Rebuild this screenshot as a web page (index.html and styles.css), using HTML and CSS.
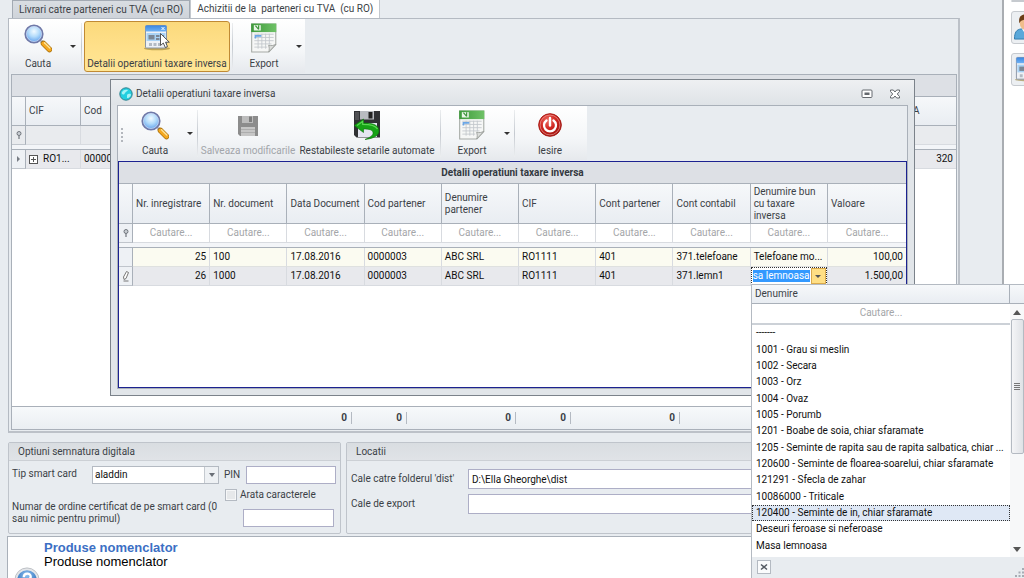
FILE: index.html
```
<!DOCTYPE html>
<html lang="ro">
<head>
    <meta charset="UTF-8">
    <meta name="viewport" content="width=device-width, initial-scale=1.0">
    <title>Detalii operatiuni taxare inversa</title>
    <link rel="stylesheet" href="styles.css">
</head>
<body>
    <!-- shared icons -->
    <svg class="defs" width="0" height="0" aria-hidden="true">
        <defs>
            <radialGradient id="gLens" cx="0.5" cy="0.35" r="0.6">
                <stop offset="0" stop-color="#f2faff"/>
                <stop offset="0.5" stop-color="#b4dcfb"/>
                <stop offset="1" stop-color="#68a6ee"/>
            </radialGradient>
            <linearGradient id="gBlue" x1="0" y1="0" x2="0" y2="1">
                <stop offset="0" stop-color="#3b86e0"/>
                <stop offset="1" stop-color="#6fb2f4"/>
            </linearGradient>
            <linearGradient id="gGreen" x1="0" y1="0" x2="1" y2="0">
                <stop offset="0" stop-color="#3f9a3c"/>
                <stop offset="1" stop-color="#6fc267"/>
            </linearGradient>
            <radialGradient id="gRed" cx="0.4" cy="0.3" r="0.75">
                <stop offset="0" stop-color="#f06a60"/>
                <stop offset="0.5" stop-color="#cf2620"/>
                <stop offset="1" stop-color="#96100c"/>
            </radialGradient>
            <radialGradient id="gHelp" cx="0.5" cy="0.25" r="0.7">
                <stop offset="0" stop-color="#8cc0f0"/>
                <stop offset="1" stop-color="#2566b4"/>
            </radialGradient>
        </defs>
        <symbol id="iconSearch" viewBox="0 0 28 28">
            <path d="M17 17l2.500 2.500" stroke="#8a8f9c" stroke-width="3"/>
            <path d="M19.500 19.500l6 6" stroke="#a8700c" stroke-width="5.500" stroke-linecap="round"/>
            <path d="M19.500 19.500l6 6" stroke="#f5a820" stroke-width="4" stroke-linecap="round"/>
            <path d="M20.500 18.800l5.300 5.300" stroke="#fde49a" stroke-width="1.400" stroke-linecap="round"/>
            <circle cx="10" cy="10" r="8.700" fill="url(#gLens)" stroke="#7079a8" stroke-width="1.800"/>
            <circle cx="10" cy="10" r="7.500" fill="none" stroke="#cfdaf0" stroke-width="0.700"/>
        </symbol>
        <symbol id="iconForm" viewBox="0 0 28 28">
            <ellipse cx="14" cy="24.500" rx="13" ry="1.700" fill="#8e7424" opacity="0.55"/>
            <rect x="2.500" y="1.500" width="21" height="22.500" rx="1" fill="#eef1f5" stroke="#8a95a5"/>
            <rect x="2.500" y="1.500" width="21" height="6" rx="1" fill="url(#gBlue)"/>
            <path d="M18.500 3l3 3m0-3l-3 3" stroke="#fff" stroke-width="1"/>
            <rect x="3.500" y="9" width="19" height="8" fill="#a9d3f5"/>
            <rect x="5.500" y="11" width="6" height="4.500" fill="#7b8794"/>
            <path d="M13 11h3.500v2H13zM13 14h3.500v2H13zM18 11h3v2h-3z" fill="#7b8794"/>
            <path d="M6 19h3v3H6zM10.500 19h3v3h-3zM15 19h2v3h-2z" fill="#b3bac3"/>
            <path d="M17.500 9.500v12l2.800-2.500 2 4.500 2.200-1-2-4.300h3.800z" fill="#fff" stroke="#444" stroke-width="0.900"/>
        </symbol>
        <symbol id="iconSheet" viewBox="0 0 26 28">
            <path d="M1.500 1h22.500v19l-6.500 7h-16z" fill="#f6f7f6" stroke="#a5aaa5"/>
            <rect x="1" y="0.500" width="23.500" height="8" fill="url(#gGreen)"/>
            <rect x="3.500" y="2" width="6.500" height="5" fill="#eaf6e8"/>
            <path d="M5 2.500l3 3.500m0-4v4" stroke="#3d943b" stroke-width="1.100" fill="none"/>
            <path d="M4 10.500h18M4 13.500h18M4 16.500h18M4 19.500h16M4 22.500h12M7.500 10v14M11 10v14M14.500 10v14M18 10v10" stroke="#c2c7cc" stroke-width="0.800"/>
            <path d="M5 14.500V12h5.500" stroke="#6ba6e6" stroke-width="1.500" fill="none"/>
            <path d="M24 20l-6.500 7c.5-2 .6-4-.2-6.200 2.500.6 4.500.2 6.700-.8z" fill="#dcdedc" stroke="#989c98" stroke-width="0.800"/>
        </symbol>
        <symbol id="iconFloppy" viewBox="0 0 22 22">
            <path d="M1 1h20v20H3l-2-2z" fill="#8c8c8c"/>
            <rect x="5" y="1" width="11" height="7" fill="#bcbcbc"/>
            <rect x="12" y="1.500" width="3" height="5.500" fill="#7d7d7d"/>
            <rect x="4" y="12" width="14" height="9" fill="#c6c6c6"/>
            <path d="M4 14.500h14M4 17.500h14" stroke="#adadad"/>
        </symbol>
        <symbol id="iconRestore" viewBox="0 0 28 30">
            <path d="M1 1h26v26.500H3.500L1 25z" fill="#303134"/>
            <path d="M2 2h4v8H2z" fill="#505154"/>
            <rect x="7" y="1" width="14" height="8.500" fill="#b8bbc0"/>
            <rect x="15.500" y="2" width="4" height="6.500" fill="#222"/>
            <rect x="5" y="13" width="19" height="14" fill="#e5e7f1"/>
            <path d="M1.200 15.500L10.500 9v4c9-.2 15.500 2 15.500 8 0 4.500-5 7.500-14 8.500 6-2.500 8.500-4.500 8-7-.5-2.700-3.500-3.500-9.500-3.500v3.500z" fill="#16a316" stroke="#0a700a" stroke-width="0.600"/>
            <path d="M4 15.400L9.700 11.500v2.800c8 0 13 1.500 14.800 4.700" stroke="#5bd653" stroke-width="1.200" fill="none"/>
        </symbol>
        <symbol id="iconPower" viewBox="0 0 24 24">
            <circle cx="12" cy="12" r="11.300" fill="url(#gRed)" stroke="#a81a14"/>
            <circle cx="12" cy="12" r="9.900" fill="none" stroke="#ee9c96" stroke-width="0.700"/>
            <path d="M8.500 7.500a6 6 0 1 0 7 0" fill="none" stroke="#fff" stroke-width="2.300" stroke-linecap="round"/>
            <path d="M12 5v7.500" stroke="#fff" stroke-width="2.400" stroke-linecap="round"/>
        </symbol>
        <symbol id="iconUser" viewBox="0 0 28 28">
            <path d="M.5 26c0-7 2-10 7-10.500h9c6 .5 9 3.500 9 10.500z" fill="#5aa8da" stroke="#347cae"/>
            <path d="M8 15h8l-4 6z" fill="#fff"/>
            <ellipse cx="12" cy="9" rx="6" ry="7.500" fill="#f0bd8c"/>
            <path d="M5.500 9.500c-1-6.500 2-9 6.500-9s7.500 2.500 6.500 9c-1-3-2-4-4-4.500-3 1-7 1-9 4.500z" fill="#6b3d16"/>
        </symbol>
        <symbol id="iconPin" viewBox="0 0 6 8">
            <circle cx="3" cy="2.500" r="2" fill="#c9ced4" stroke="#70757c"/>
            <path d="M3 4.500V8" stroke="#70757c" stroke-width="1.200"/>
        </symbol>
    </svg>

    <main class="workspace">
        <nav class="tabs">
            <a class="tab" href="#livrari">Livrari catre parteneri cu TVA (cu RO)</a>
            <a class="tab active" href="#achizitii">Achizitii de la&nbsp; parteneri cu TVA&nbsp; (cu RO)</a>
        </nav>

        <section class="panel">
            <div class="toolbar main-toolbar">
                <button class="tool search-tool"><svg class="tool-icon"><use href="#iconSearch"/></svg>Cauta</button>
                <button class="drop" aria-label="Optiuni cautare"></button>
                <span class="split"></span>
                <button class="tool pressed"><svg class="tool-icon"><use href="#iconForm"/></svg>Detalii operatiuni taxare inversa</button>
                <span class="split"></span>
                <button class="tool export-tool"><svg class="tool-icon"><use href="#iconSheet"/></svg>Export</button>
                <button class="drop" aria-label="Optiuni export"></button>
            </div>

            <div class="grid-box">
                <table class="grid back-grid">
                    <colgroup><col class="col-mark"><col class="col-cif"><col><col class="col-tva"></colgroup>
                    <thead>
                        <tr class="band"><th colspan="4"></th></tr>
                        <tr class="heads"><th></th><th>CIF</th><th>Cod</th><th>TVA</th></tr>
                        <tr class="filters"><td class="mark"><svg class="pin"><use href="#iconPin"/></svg></td><td></td><td></td><td></td></tr>
                        <tr class="spacer"><td colspan="4"></td></tr>
                    </thead>
                    <tbody>
                        <tr class="even"><td class="mark"><i class="row-arrow"></i></td><td><button class="expand" aria-label="Extinde"></button>RO1...</td><td>0000003</td><td class="num">320</td></tr>
                    </tbody>
                </table>
                <div class="sums">
                    <span class="sum first">0</span>
                    <span class="sum">0</span>
                    <span class="sum wide">0</span>
                    <span class="sum">0</span>
                    <span class="sum wide">0</span>
                </div>
            </div>
        </section>

        <div class="groups">
            <fieldset class="group sign-group">
                <legend>Optiuni semnatura digitala</legend>
                <div class="sign-row">
                    <label class="sign-label" for="cardType">Tip smart card</label>
                    <span class="select-box"><select id="cardType"><option>aladdin</option></select></span>
                    <label class="pin-label" for="pinCode">PIN</label>
                    <input class="field pin-field" id="pinCode" type="text">
                </div>
                <div class="sign-row second">
                    <label class="order-label" for="orderNo">Numar de ordine certificat de pe smart card (0 sau nimic pentru primul)</label>
                    <div class="order-side">
                        <label class="check"><input type="checkbox">Arata caracterele</label>
                        <input class="field order-field" id="orderNo" type="text">
                    </div>
                </div>
            </fieldset>
            <fieldset class="group place-group">
                <legend>Locatii</legend>
                <div class="place-row">
                    <label for="distPath">Cale catre folderul 'dist'</label>
                    <input class="field" id="distPath" type="text" value="D:\Ella Gheorghe\dist">
                </div>
                <div class="place-row">
                    <label for="exportPath">Cale de export</label>
                    <input class="field" id="exportPath" type="text">
                </div>
            </fieldset>
        </div>

        <section class="help">
            <svg class="help-icon" viewBox="0 0 28 28">
                <circle cx="14" cy="14" r="13" fill="#e4e6e9" stroke="#b9bcc1"/>
                <circle cx="14" cy="14" r="10.500" fill="url(#gHelp)"/>
                <path d="M10.500 11c0-5 7.500-5 7.500-.5 0 3-4 3-4 6.500" fill="none" stroke="#fff" stroke-width="2.500"/>
                <circle cx="14" cy="20.500" r="1.500" fill="#fff"/>
            </svg>
            <div>
                <h2>Produse nomenclator</h2>
                <p>Produse nomenclator</p>
            </div>
        </section>
    </main>

    <aside class="side">
        <button class="side-button" aria-label="Firma"></button>
        <button class="side-button" aria-label="Utilizator"><svg><use href="#iconUser"/></svg></button>
        <button class="side-button" aria-label="Formular"><svg><use href="#iconForm"/></svg></button>
    </aside>

    <section class="dialog" role="dialog" aria-label="Detalii operatiuni taxare inversa">
        <header class="dialog-title">
            <svg class="app-icon" viewBox="0 0 14 14">
                <circle cx="7" cy="7" r="6.200" fill="#22cfe0" stroke="#34808e"/>
                <path d="M2.500 6c1-3 4-4 6.500-3-1 2-2 1-3 3s-2 2-3.500 0zM8 8c2-2 4-1 4 0s-2 3.500-4 3z" fill="#a4f3f6"/>
            </svg>
            <span class="dialog-name">Detalii operatiuni taxare inversa</span>
            <button class="win-button" aria-label="Maximizeaza"><svg viewBox="0 0 12 12"><rect x="1" y="2" width="10" height="7.500" rx="1" fill="#fff" stroke="#65696e"/><rect x="3.500" y="4.500" width="5" height="2.500" fill="#65696e"/></svg></button>
            <button class="win-button" aria-label="Inchide"><svg viewBox="0 0 12 12"><path d="M1.500 2h2.800L6 4l1.700-2h2.800v1.500L8.300 6l2.200 2.500V10H7.700L6 8l-1.700 2H1.500V8.500L3.700 6 1.500 3.500z" fill="#fff" stroke="#65696e"/></svg></button>
        </header>
        <div class="dialog-body">
            <div class="toolbar dialog-toolbar">
                <span class="grip"></span>
                <button class="tool search-tool"><svg class="tool-icon"><use href="#iconSearch"/></svg>Cauta</button>
                <button class="drop" aria-label="Optiuni cautare"></button>
                <span class="split"></span>
                <button class="tool save-tool" disabled><svg class="tool-icon floppy"><use href="#iconFloppy"/></svg>Salveaza modificarile</button>
                <button class="tool restore-tool"><svg class="tool-icon"><use href="#iconRestore"/></svg>Restabileste setarile automate</button>
                <span class="split"></span>
                <button class="tool export-tool"><svg class="tool-icon"><use href="#iconSheet"/></svg>Export</button>
                <button class="drop" aria-label="Optiuni export"></button>
                <span class="split"></span>
                <button class="tool exit-tool"><svg class="tool-icon power"><use href="#iconPower"/></svg>Iesire</button>
            </div>

            <div class="detail-box">
                <table class="grid detail-grid">
                    <colgroup><col class="col-mark"><col span="9"><col class="col-value"></colgroup>
                    <thead>
                        <tr class="band"><th colspan="11">Detalii operatiuni taxare inversa</th></tr>
                        <tr class="heads">
                            <th></th>
                            <th>Nr. inregistrare</th>
                            <th>Nr. document</th>
                            <th>Data Document</th>
                            <th>Cod partener</th>
                            <th>Denumire<br>partener</th>
                            <th>CIF</th>
                            <th>Cont partener</th>
                            <th>Cont contabil</th>
                            <th>Denumire bun<br>cu taxare<br>inversa</th>
                            <th>Valoare</th>
                        </tr>
                        <tr class="filters">
                            <td class="mark"><svg class="pin"><use href="#iconPin"/></svg></td>
                            <td><input type="text" placeholder="Cautare..." aria-label="Nr. inregistrare"></td>
                            <td><input type="text" placeholder="Cautare..." aria-label="Nr. document"></td>
                            <td><input type="text" placeholder="Cautare..." aria-label="Data Document"></td>
                            <td><input type="text" placeholder="Cautare..." aria-label="Cod partener"></td>
                            <td><input type="text" placeholder="Cautare..." aria-label="Denumire partener"></td>
                            <td><input type="text" placeholder="Cautare..." aria-label="CIF"></td>
                            <td><input type="text" placeholder="Cautare..." aria-label="Cont partener"></td>
                            <td><input type="text" placeholder="Cautare..." aria-label="Cont contabil"></td>
                            <td><input type="text" placeholder="Cautare..." aria-label="Denumire bun"></td>
                            <td><input type="text" placeholder="Cautare..." aria-label="Valoare"></td>
                        </tr>
                        <tr class="spacer"><td colspan="11"></td></tr>
                    </thead>
                    <tbody>
                        <tr class="odd">
                            <td class="mark"></td><td class="num">25</td><td>100</td><td>17.08.2016</td><td>0000003</td><td>ABC SRL</td><td>RO1111</td><td>401</td><td>371.telefoane</td><td>Telefoane mo...</td><td class="num">100,00</td>
                        </tr>
                        <tr class="even">
                            <td class="mark"><svg class="pencil" viewBox="0 0 8 12"><path d="M2 9.500L1.500 7 4.500 1.500 6.500 2.500 4 8.500z" fill="#fff" stroke="#777"/><path d="M1.500 11h5" stroke="#777"/></svg></td>
                            <td class="num">26</td><td>1000</td><td>17.08.2016</td><td>0000003</td><td>ABC SRL</td><td>RO1111</td><td>401</td><td>371.lemn1</td>
                            <td class="editing"><div class="combo"><input type="text" value="sa lemnoasa" aria-label="Denumire bun"><button aria-label="Deschide lista"></button></div></td>
                            <td class="num">1.500,00</td>
                        </tr>
                    </tbody>
                </table>
            </div>
        </div>
    </section>

    <section class="lookup">
        <div class="lookup-head"><span>Denumire</span></div>
        <div class="lookup-main">
            <div class="lookup-content">
                <input class="lookup-search" type="text" placeholder="Cautare..." aria-label="Denumire">
                <ul class="options" role="listbox" aria-label="Denumire">
                    <li role="option">-------</li>
                    <li role="option">1001 - Grau si meslin</li>
                    <li role="option">1002 - Secara</li>
                    <li role="option">1003 - Orz</li>
                    <li role="option">1004 - Ovaz</li>
                    <li role="option">1005 - Porumb</li>
                    <li role="option">1201 - Boabe de soia, chiar sfaramate</li>
                    <li role="option">1205 - Seminte de rapita sau de rapita salbatica, chiar ...</li>
                    <li role="option">120600 - Seminte de floarea-soarelui, chiar sfaramate</li>
                    <li role="option">121291 - Sfecla de zahar</li>
                    <li role="option">10086000 - Triticale</li>
                    <li role="option" class="current" aria-selected="true">120400 - Seminte de in, chiar sfaramate</li>
                    <li role="option">Deseuri feroase si neferoase</li>
                    <li role="option">Masa lemnoasa</li>
                </ul>
            </div>
            <div class="scroll">
                <i class="scroll-up"></i>
                <div class="thumb"><i></i></div>
                <i class="scroll-down"></i>
            </div>
        </div>
        <footer class="lookup-foot">
            <button aria-label="Inchide"><svg viewBox="0 0 8 8"><path d="M1 1.500l6 5m0-5l-6 5" stroke="#555b63" stroke-width="1.500"/></svg></button>
            <svg class="resize" viewBox="0 0 9 9"><path d="M7 0h2v2H7zM7 3.500h2v2H7zM7 7h2v2H7zM3.500 3.500h2v2h-2zM3.500 7h2v2h-2zM0 7h2v2H0z" fill="#a6acb4"/></svg>
        </footer>
    </section>
</body>
</html>
```
FILE: styles.css
```
* {
    box-sizing: border-box;
}
body {
    margin: 0;
    height: 100vh;
    overflow: hidden;
    display: flex;
    position: relative;
    background: #e8ecf0;
    color: #3b3f46;
    font-family: Roboto, "DejaVu Sans Condensed", sans-serif;
    font-size: 10px;
    line-height: 12px;
}
button, input, select {
    font: inherit;
    color: inherit;
    margin: 0;
    padding: 0;
    border: 0;
    border-radius: 0;
    background: none;
}
.defs {
    position: absolute;
}

/* main window */
.workspace {
    flex: 1;
    min-width: 0;
    display: flex;
    flex-direction: column;
}
.tabs {
    flex: none;
    display: flex;
    padding-left: 12px;
    height: 18px;
}
.tab {
    padding: 3px 6px 0;
    color: #3b3f46;
    text-decoration: none;
    white-space: nowrap;
    background: linear-gradient(#d9dde2, #cfd4da);
    border: 1px solid #a3aab3;
    border-bottom: 0;
}
.tab.active {
    background: #fff;
    border-color: #c3c8ce;
    border-top: 0;
}
.panel {
    flex: none;
    margin: 0 42px 0 8px;
    height: 415px;
    display: flex;
    flex-direction: column;
    border: 1px solid #b4bac2;
    border-right: 2px solid #bcc1c8;
    border-bottom: 2px solid #bcc1c8;
}

/* toolbars */
.toolbar {
    display: flex;
    align-items: stretch;
    align-self: flex-start;
    height: 54px;
    background: linear-gradient(#fff, #f4f6f8 60%, #e6e9ed);
}
.main-toolbar {
    padding: 2px 0 1px;
    width: 296px;
}
.tool {
    display: flex;
    flex-direction: column;
    align-items: center;
    justify-content: space-between;
    padding: 2px;
    white-space: nowrap;
}
.tool:disabled {
    color: #a2a5aa;
}
.tool-icon {
    width: 28px;
    height: 30px;
}
.floppy {
    width: 22px;
    height: 32px;
}
.power {
    width: 24px;
}
.search-tool {
    width: 58px;
}
.save-tool {
    width: 96px;
}
.restore-tool {
    width: 142px;
}
.export-tool {
    width: 58px;
}
.exit-tool {
    width: 66px;
}
.pressed {
    background: linear-gradient(#fbd97c, #ffe08a 50%, #ffe695);
    border: 1px solid #c08a34;
    border-radius: 3px;
    padding: 1px;
    width: 146px;
}
.drop {
    width: 12px;
    display: flex;
    align-items: center;
    justify-content: center;
}
.drop::before {
    content: "";
    border: 3px solid transparent;
    border-top-color: #333;
    border-bottom: 0;
}
.split {
    width: 1px;
    margin: 2px 2px;
    background: linear-gradient(#eceef0, #c5cad0, #eceef0);
}
.grip {
    width: 3px;
    height: 14px;
    margin: 20px 2px 0 3px;
    border-left: 2px dotted #b3b7bd;
}

/* grids */
.grid {
    width: 100%;
    table-layout: fixed;
    border-collapse: separate;
    border-spacing: 0;
    color: #101010;
}
.grid th, .grid td {
    padding: 0 3px;
    overflow: hidden;
    white-space: nowrap;
    text-align: left;
    font-weight: normal;
    border-right: 1px solid #d8dbe0;
}
.grid .band th {
    height: 21px;
    color: #333840;
    font-weight: bold;
    text-align: center;
    background: #dde0e5;
    border-right: 0;
}
.grid .heads th {
    color: #3b3f46;
    background: linear-gradient(#f6f8fa, #e9edf2);
    border-top: 1px solid #a9b0b9;
    border-right-color: #a9b0b9;
    border-bottom: 1px solid #a9b0b9;
}
.filters td {
    height: 19px;
    background: #fff;
    border-bottom: 1px solid #d8dbe0;
}
.grid .spacer td {
    height: 5px;
    background: #f3f5f8;
    border-bottom: 1px solid #a9b0b9;
    border-right: 0;
}
.grid .mark {
    padding: 0;
    text-align: center;
    background: #eef1f5;
    border-right-color: #a9b0b9;
    border-bottom: 1px solid #c0c5cc;
}
.grid .num {
    text-align: right;
}
.odd td {
    height: 19px;
    background: #fbfbf1;
    border-bottom: 1px solid #dfe1e0;
}
.even td {
    height: 19px;
    background: #e8e9ed;
    border-bottom: 1px solid #d8dbe0;
}
.grid tr > :last-child {
    border-right: 0;
}
.col-mark {
    width: 14px;
}
.col-cif {
    width: 55px;
}
.col-tva {
    width: 58px;
}
.pin {
    display: block;
    margin: 0 auto;
    width: 6px;
    height: 8px;
}
.pencil {
    display: block;
    margin: 0 auto;
    width: 8px;
    height: 12px;
}
.row-arrow {
    display: inline-block;
    border: 3px solid transparent;
    border-left-color: #777c84;
    border-right: 0;
}

/* background grid */
.grid-box {
    flex: 1;
    display: flex;
    flex-direction: column;
    justify-content: space-between;
    margin: 1px 1px 1px 2px;
    background: #fff;
    border: 1px solid #a9b0b9;
}
.back-grid .heads th {
    height: 30px;
}
.back-grid .filters td {
    background: #e9ebee;
}
.expand {
    width: 9px;
    height: 9px;
    margin-right: 5px;
    vertical-align: -1px;
    border: 1px solid #555;
    background: linear-gradient(#555, #555) center / 5px 1px no-repeat, linear-gradient(#555, #555) center / 1px 5px no-repeat, #fff;
}
.sums {
    display: flex;
    align-items: center;
    height: 23px;
    border-top: 1px solid #a9b0b9;
    background: linear-gradient(#f7f9fb, #eaeef2);
    font-weight: bold;
}
.sum {
    width: 55px;
    padding-right: 4px;
    text-align: right;
    border-right: 1px solid #b4bac2;
}
.sum.first {
    width: 340px;
}
.sum.wide {
    width: 109px;
}

/* option groups */
.groups {
    flex: none;
    display: flex;
    gap: 5px;
    margin: 9px 42px 0 8px;
    height: 92px;
}
.group {
    margin: 0;
    padding: 0;
    border: 1px solid #bfc4cb;
    border-radius: 2px;
    min-width: 0;
}
.group legend {
    float: left;
    width: 100%;
    height: 18px;
    padding: 3px 9px;
    background: linear-gradient(#d9dde1, #e0e3e7);
    border-bottom: 1px solid #ccd0d5;
}
.sign-group {
    width: 333px;
}
.place-group {
    flex: 1;
}
.place-group legend {
    margin-bottom: 3px;
}
.field {
    height: 18px;
    padding: 0 3px;
    color: #101010;
    background: #fff;
    border: 1px solid #adaec6;
}
.sign-row {
    clear: both;
    display: flex;
    padding: 5px 4px 0 3px;
}
.sign-label {
    width: 80px;
    padding-top: 2px;
}
.select-box {
    position: relative;
    width: 127px;
}
.select-box select {
    width: 100%;
    height: 18px;
    padding: 0 2px;
    appearance: none;
    color: #101010;
    background: linear-gradient(90deg, #fff 111px, #c5cad0 111px, #c5cad0 112px, #eef1f4 112px);
    border: 1px solid #b4bac2;
}
.select-box::after {
    content: "";
    position: absolute;
    top: 7px;
    right: 4px;
    border: 3px solid transparent;
    border-top: 4px solid #6a6f77;
    border-bottom: 0;
    pointer-events: none;
}
.pin-label {
    width: 27px;
    padding: 3px 0 0 5px;
}
.pin-field {
    flex: 1;
    min-width: 0;
}
.sign-row.second {
    justify-content: space-between;
}
.order-label {
    width: 208px;
    padding-top: 12px;
}
.order-side {
    display: flex;
    flex-direction: column;
    width: 111px;
}
.check {
    display: flex;
    align-items: center;
    gap: 3px;
    white-space: nowrap;
}
.check input {
    appearance: none;
    width: 12px;
    height: 12px;
    border: 1px solid #b4bac2;
    background: #e6e8ea;
    box-shadow: inset 0 0 0 1px #f6f7f8;
}
.order-field {
    width: 91px;
    margin: 8px 0 0 18px;
}
.place-row {
    clear: both;
    display: flex;
    align-items: center;
    padding-top: 5px;
    padding-left: 4px;
}
.place-row label {
    width: 117px;
    white-space: nowrap;
}
.place-row .field {
    flex: 1;
    height: 20px;
}

/* help panel */
.help {
    flex: 1;
    min-height: 0;
    overflow: hidden;
    display: flex;
    gap: 4px;
    margin: 2px 0 0 7px;
    padding: 4px 6px 0;
    background: #fff;
    border: 1px solid #a9b0b9;
    border-right: 0;
    border-bottom: 0;
    font-family: "Liberation Sans", Arial, sans-serif;
    font-size: 13px;
    line-height: 14px;
    color: #000;
}
.help-icon {
    width: 26px;
    height: 26px;
    margin-top: 26px;
    flex: none;
}
.help h2 {
    margin: 0;
    font-size: 13px;
    color: #3c6fc4;
}
.help p {
    margin: 0;
}

/* right strip */
.side {
    width: 22px;
    overflow: hidden;
    padding-left: 7px;
    background: #fff;
    border-left: 2px solid #a9adb2;
}
.side-button {
    display: block;
    width: 33px;
    height: 33px;
    margin-bottom: 9px;
    border: 1px solid #c6cacf;
    border-radius: 3px;
    background: #eceff2;
}
.side-button:first-child {
    height: 2px;
}
.side-button svg {
    display: block;
    width: 27px;
    height: 27px;
    margin: 0 2px;
}

/* dialog window */
.dialog {
    position: absolute;
    top: 79px;
    left: 110px;
    right: 109px;
    height: 317px;
    display: flex;
    flex-direction: column;
    padding: 0 6px 6px;
    background: #e1e5e9;
    border: 1px solid #7b828a;
}
.dialog-title {
    display: flex;
    align-items: center;
    height: 25px;
    margin: 0 -6px;
    padding: 3px 13px 0 8px;
    background: linear-gradient(#eef0f2, #dfe3e7);
}
.app-icon {
    width: 14px;
    height: 14px;
    margin-right: 3px;
}
.dialog-name {
    flex: 1;
}
.win-button {
    width: 12px;
    height: 12px;
    margin-left: 16px;
}
.win-button svg {
    display: block;
}
.dialog-body {
    flex: 1;
    display: flex;
    flex-direction: column;
    background: #e8ecf0;
    border: 1px solid #a9b0b9;
}
.dialog-toolbar {
    padding: 2px 0 1px;
    width: 469px;
}
.dialog-toolbar .drop {
    width: 11px;
}
.detail-box {
    flex: 1;
    margin-top: 1px;
    background: #fff;
    border: 1px solid #1c2290;
}
.detail-grid .heads th {
    height: 41px;
}
.col-value {
    width: 78px;
}
.filters input {
    display: block;
    width: 100%;
    text-align: center;
}
::placeholder {
    color: #a4a6a9;
    opacity: 1;
}
.grid .editing {
    padding: 0;
}
.combo {
    display: flex;
    height: 18px;
    background: #fff;
    border: 1px dotted #333;
}
.combo input {
    flex: 1;
    min-width: 0;
    margin: 2px 1px;
    color: #fff;
    background: #3399ff;
}
.combo button {
    width: 15px;
    background: #ffdf85;
    border: 1px solid #dbaa4c;
    display: flex;
    align-items: center;
    justify-content: center;
}
.combo button::before {
    content: "";
    border: 3px solid transparent;
    border-top-color: #555;
    border-bottom: 0;
}

/* lookup list */
.lookup {
    position: absolute;
    top: 284px;
    right: 0;
    bottom: 0;
    width: 273px;
    display: flex;
    flex-direction: column;
    background: #fff;
    border: 1px solid #b4bac2;
    border-right: 0;
    border-bottom: 0;
    color: #101010;
}
.lookup-head {
    display: flex;
    height: 19px;
    padding-right: 14px;
    background: linear-gradient(#f6f8fa, #e9edf2);
    border-bottom: 1px solid #a9b0b9;
    color: #3b3f46;
}
.lookup-head span {
    flex: 1;
    padding: 3px 3px;
    border-right: 1px solid #a9b0b9;
}
.lookup-main {
    flex: 1;
    min-height: 0;
    display: flex;
}
.lookup-content {
    flex: 1;
    min-width: 0;
    display: flex;
    flex-direction: column;
}
.lookup-search {
    flex: none;
    height: 21px;
    padding-bottom: 3px;
    text-align: center;
    border-bottom: 2px solid #ccd1d7;
}
.options {
    flex: 1;
    display: flex;
    flex-direction: column;
    list-style: none;
    margin: 0;
    padding: 0 0 3px;
}
.options li {
    flex: 1;
    display: flex;
    align-items: center;
    padding: 0 3px;
    border: 1px solid transparent;
    white-space: nowrap;
}
.options .current {
    background: #dfe8f5;
    border: 1px dotted #333;
}
.scroll {
    flex: none;
    width: 14px;
    display: flex;
    flex-direction: column;
    align-items: center;
    padding: 6px 0 5px;
    background: #f7f8f9;
}
.scroll-up {
    border: 4px solid transparent;
    border-bottom: 5px solid #555;
    border-top: 0;
}
.scroll-down {
    margin-top: auto;
    border: 4px solid transparent;
    border-top: 5px solid #555;
    border-bottom: 0;
}
.thumb {
    width: 13px;
    height: 135px;
    margin-top: 4px;
    display: flex;
    align-items: center;
    justify-content: center;
    background: linear-gradient(90deg, #f4f5f7, #dfe2e6);
    border: 1px solid #b4bac2;
    border-radius: 2px;
}
.thumb i {
    width: 6px;
    height: 7px;
    background: repeating-linear-gradient(#777 0, #777 1px, transparent 1px, transparent 2px);
}
.lookup-foot {
    display: flex;
    align-items: center;
    justify-content: space-between;
    height: 21px;
    padding: 0 0 1px 5px;
    background: #e8ecf0;
}
.lookup-foot button {
    width: 14px;
    height: 14px;
    display: flex;
    align-items: center;
    justify-content: center;
    background: #fafbfc;
    border: 1px solid #b4bac2;
}
.lookup-foot button svg {
    width: 8px;
    height: 8px;
}
.resize {
    width: 9px;
    height: 9px;
    align-self: flex-end;
}
```
